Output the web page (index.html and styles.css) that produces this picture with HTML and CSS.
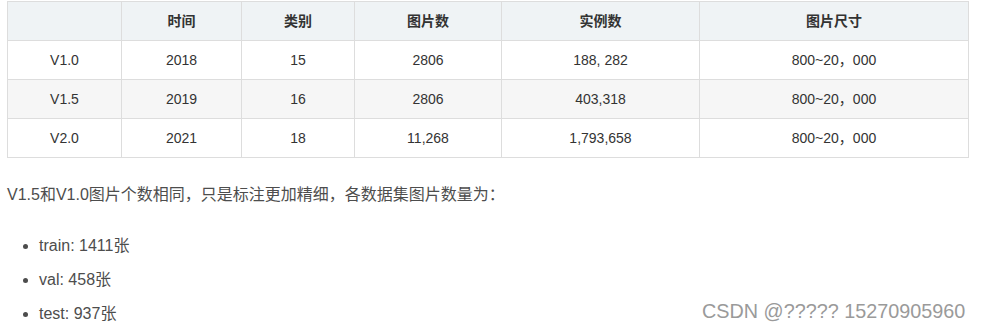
FILE: index.html
```html
<!DOCTYPE html>
<html lang="zh-CN">
<head>
<meta charset="utf-8">
<link rel="stylesheet" href="styles.css">
</head>
<body>
<div class="article">
  <table class="data">
    <colgroup>
      <col class="c1"><col class="c2"><col class="c3"><col class="c4"><col class="c5"><col class="c6">
    </colgroup>
    <thead>
      <tr><th></th><th>时间</th><th>类别</th><th>图片数</th><th>实例数</th><th>图片尺寸</th></tr>
    </thead>
    <tbody>
      <tr><td>V1.0</td><td>2018</td><td>15</td><td>2806</td><td>188, 282</td><td>800~20，000</td></tr>
      <tr class="alt"><td>V1.5</td><td>2019</td><td>16</td><td>2806</td><td>403,318</td><td>800~20，000</td></tr>
      <tr><td>V2.0</td><td>2021</td><td>18</td><td>11,268</td><td>1,793,658</td><td>800~20，000</td></tr>
    </tbody>
  </table>
  <p class="para">V1.5和V1.0图片个数相同，只是标注更加精细，各数据集图片数量为：</p>
  <ul class="list">
    <li>train: 1411张</li>
    <li>val: 458张</li>
    <li>test: 937张</li>
  </ul>
</div>
<div class="watermark">CSDN @????? 15270905960</div>
</body>
</html>
```
FILE: styles.css
```css
html, body {
  margin: 0;
  padding: 0;
  background: #fff;
}
body {
  font-family: "Liberation Sans", "Noto Sans CJK SC", sans-serif;
  color: #4d4d4d;
  width: 981px;
  height: 328px;
  overflow: hidden;
  position: relative;
}
.article {
  padding: 1px 0 0 7px;
}
.data {
  border-collapse: collapse;
  width: 961px;
  table-layout: fixed;
  font-size: 14px;
  color: #333;
}
.c1 { width: 114px; }
.c2 { width: 120px; }
.c3 { width: 113px; }
.c4 { width: 147px; }
.c5 { width: 198px; }
.c6 { width: 269px; }
.data th, .data td {
  border: 1px solid #ddd;
  height: 38px;
  padding: 0 8px;
  text-align: center;
  vertical-align: middle;
  line-height: 22px;
}
.data th {
  background: #eff3f5;
  font-weight: bold;
  color: #333;
}
.data tr.alt td {
  background: #f6f6f6;
}
.para {
  margin: 24px 0 0;
  font-size: 16px;
  line-height: 26px;
}
.list {
  margin: 25px 0 0;
  padding-left: 32px;
  font-size: 16px;
  list-style: disc;
}
.list li {
  line-height: 26px;
  margin-bottom: 8px;
}
.list li::marker {
  color: #4d4d4d;
}
.watermark {
  position: absolute;
  left: 702px;
  top: 300px;
  font-size: 19.8px;
  color: #9a9a9a;
  text-shadow: 0 0 1px #fff;
}
```
